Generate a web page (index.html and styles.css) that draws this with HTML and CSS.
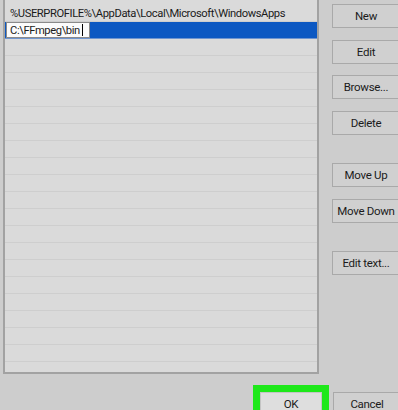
FILE: index.html
```html
<!DOCTYPE html>
<html lang="en">
<head>
  <meta charset="UTF-8" />
  <title>Edit environment variable</title>
  <link rel="stylesheet" href="styles.css">
</head>

<body>
  <div class="dialog">
    <!-- Path list + side buttons -->
    <div class="main">
      <div class="path-list">
        <div class="row">%USERPROFILE%\AppData\Local\Microsoft\WindowsApps</div>
        <div class="row selected">
          <div class="edit-box">C:\FFmpeg\bin<span class="caret"></span></div>
        </div>
        <div class="row"></div>
        <div class="row"></div>
        <div class="row"></div>
        <div class="row"></div>
        <div class="row"></div>
        <div class="row"></div>
        <div class="row"></div>
        <div class="row"></div>
        <div class="row"></div>
        <div class="row"></div>
        <div class="row"></div>
        <div class="row"></div>
        <div class="row"></div>
        <div class="row"></div>
        <div class="row"></div>
        <div class="row"></div>
        <div class="row"></div>
        <div class="row"></div>
        <div class="row"></div>
        <div class="row"></div>
      </div>

      <div class="side-buttons">
        <button class="btn">New</button>
        <button class="btn">Edit</button>
        <button class="btn">Browse...</button>
        <button class="btn">Delete</button>
        <button class="btn group-start">Move Up</button>
        <button class="btn">Move Down</button>
        <button class="btn group-start">Edit text...</button>
      </div>
    </div>

    <!-- OK / Cancel -->
    <div class="footer">
      <button class="btn ok">OK</button>
      <button class="btn">Cancel</button>
    </div>
  </div>
</body>
</html>
```

FILE: styles.css
```css
/* Basic reset */
* {
  margin: 0;
  padding: 0;
  box-sizing: border-box;
  font-family: Roboto, "Open Sans", "Liberation Sans", sans-serif;
}

body {
  width: 398px;
  height: 410px;
  overflow: hidden;
  background-color: #cdcdcd;
  color: #1b1b1b;
}

.dialog {
  display: flex;
  flex-direction: column;
}

.main {
  display: flex;
  padding-left: 3px;
}

/* The list of paths */
.path-list {
  flex-shrink: 0;
  width: 316px;
  height: 374px;
  padding-top: 5px;
  background-color: #dadada;
  border: 2px solid #a2a2a2;
  border-top: none;
  overflow: hidden;
}

.row {
  height: 17px;
  border-bottom: 1px solid #cecece;
  padding: 1px 0 0 5px;
  font-size: 11.2px;
  line-height: 15px;
  letter-spacing: -0.4px;
  white-space: nowrap;
}

.row.selected {
  background-color: #0c58c2;
  padding: 0 0 0 1px;
  border-bottom-color: #6f95cf;
}

.edit-box {
  width: 84px;
  height: 16px;
  background-color: #fbfbfb;
  border: 1px solid #8a8a8a;
  padding: 1px 0 0 3px;
  line-height: 13px;
  color: #1b1b1b;
}

.caret {
  display: inline-block;
  width: 1px;
  height: 12px;
  margin-left: 2px;
  vertical-align: -2px;
  background-color: #000;
}

/* Buttons on the right */
.side-buttons {
  flex-shrink: 0;
  display: flex;
  flex-direction: column;
  gap: 11.5px;
  padding-top: 4px;
  margin-left: 13px;
}

.btn {
  width: 68px;
  height: 24px;
  background-color: #d0d0d0;
  border: 1px solid #a9a9a9;
  font-size: 11.5px;
  letter-spacing: -0.3px;
  color: #1b1b1b;
  text-align: center;
  flex-shrink: 0;
}

.btn.group-start {
  margin-top: 17px;
}

/* Bottom row */
.footer {
  display: flex;
  justify-content: flex-end;
  gap: 11px;
  padding-top: 18px;
  margin-right: -3px;
}

.btn.ok {
  width: 62px;
  background-color: #dedede;
  border-color: #c4c4c4;
  outline: 7px solid #1ee81a;
}
```
